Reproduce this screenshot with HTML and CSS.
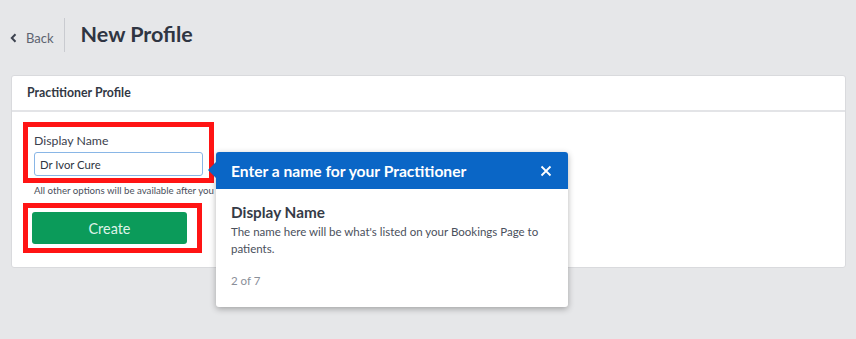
FILE: index.html
```html
<!DOCTYPE html>
<html lang="en">
<head>
    <meta charset="UTF-8">
    <title>New Profile</title>
    <link rel="stylesheet" href="styles.css">
</head>
<body>
    <div class="page-header">
        <a class="back-link" href="#">
            <svg width="7" height="10" viewBox="0 0 7 10"><path d="M5.5 1.2 L1.8 5 L5.5 8.8" fill="none" stroke="#3d4350" stroke-width="2"/></svg>
            Back
        </a>
        <div class="divider"></div>
        <h1>New Profile</h1>
    </div>

    <div class="card">
        <div class="card-header">Practitioner Profile</div>
        <div class="card-body">
            <div class="highlight field-box">
                <label for="displayName">Display Name</label>
                <input id="displayName" type="text" value="Dr Ivor Cure">
            </div>
            <p class="hint">All other options will be available after you create the profile.</p>
            <div class="highlight button-box">
                <button class="btn-create">Create</button>
            </div>
        </div>
    </div>

    <div class="tour-popover">
        <div class="tour-header">
            <span>Enter a name for your Practitioner</span>
            <svg width="12" height="12" viewBox="0 0 12 12"><path d="M1.5 1.5 L10.5 10.5 M10.5 1.5 L1.5 10.5" stroke="#fff" stroke-width="1.8"/></svg>
        </div>
        <div class="tour-body">
            <h3>Display Name</h3>
            <p>The name here will be what's listed on your Bookings Page to patients.</p>
            <div class="tour-step">2 of 7</div>
        </div>
    </div>
</body>
</html>
```

FILE: styles.css
```css
body {
    position: relative;
    margin: 0;
    min-height: 339px;
    background-color: #e6e7e9;
    font-family: 'Lato', 'Liberation Sans', sans-serif;
    color: #323844;
}

.page-header {
    display: flex;
    align-items: center;
    height: 34px;
    padding: 18px 0 23px 10px;
}

.back-link {
    display: flex;
    align-items: center;
    gap: 9px;
    color: #5d6370;
    font-size: 13px;
    text-decoration: none;
    margin-top: 5px;
}

.divider {
    width: 1px;
    height: 34px;
    background-color: #c9cbd0;
    margin: 0 16px 0 10px;
}

.page-header h1 {
    margin: 0 0 3px;
    font-size: 21.5px;
    font-weight: 700;
    color: #2f3542;
}

.card {
    margin: 0 10px 0 11px;
    background-color: #fff;
    border: 1px solid #d9dadd;
    border-radius: 3px;
}

.card-header {
    height: 34px;
    line-height: 34px;
    padding: 0 15px;
    font-size: 12.3px;
    font-weight: 700;
    border-bottom: 2px solid #e3e4e7;
}

.card-body {
    padding: 10px 12px 14px 11px;
}

.highlight {
    border: 5px solid #ff1414;
}

.field-box {
    width: 175px;
    padding: 6px 0 2px 6px;
}

.field-box label {
    display: block;
    font-size: 12.3px;
    line-height: 14px;
    margin: 1px 0 4px;
    color: #3b414d;
}

.field-box input {
    display: block;
    box-sizing: border-box;
    width: 169px;
    height: 24px;
    padding: 0 5px;
    border: 1px solid #89b6e6;
    border-radius: 3px;
    font-family: 'Lato', 'Liberation Sans', sans-serif;
    font-size: 11.3px;
    color: #2f3542;
    outline: none;
}

.hint {
    margin: 1px 0 7px 11px;
    font-size: 9.7px;
    line-height: 12px;
    color: #4a505c;
    white-space: nowrap;
}

.button-box {
    width: 165px;
    padding: 4px 0 4px 4px;
}

.btn-create {
    display: block;
    width: 155px;
    height: 32px;
    border: none;
    border-radius: 3px;
    background-color: #0b9b5a;
    color: #dff3e8;
    font-family: 'Lato', 'Liberation Sans', sans-serif;
    font-size: 14.4px;
}

.tour-popover {
    position: absolute;
    left: 216px;
    top: 152px;
    width: 352px;
    background-color: #fff;
    border-radius: 3px;
    box-shadow: 0 2px 6px rgba(0, 0, 0, 0.3);
}

.tour-popover::before {
    content: '';
    position: absolute;
    left: -8px;
    top: 10px;
    border-top: 8px solid transparent;
    border-bottom: 8px solid transparent;
    border-right: 8px solid #0a66c6;
}

.tour-header {
    display: flex;
    justify-content: space-between;
    align-items: center;
    height: 37px;
    padding: 0 16px 0 15px;
    background-color: #0a66c6;
    border-radius: 3px 3px 0 0;
    color: #fff;
    font-size: 15.6px;
    font-weight: 700;
}

.tour-body {
    padding: 14px 15px 20px;
}

.tour-body h3 {
    margin: 0 0 1px;
    font-size: 15.3px;
    line-height: 19px;
    font-weight: 700;
    color: #353b47;
}

.tour-body p {
    margin: 0 0 17px;
    font-size: 11.5px;
    line-height: 17px;
    color: #4a505c;
}

.tour-step {
    font-size: 11.5px;
    color: #8a8f99;
}
```
